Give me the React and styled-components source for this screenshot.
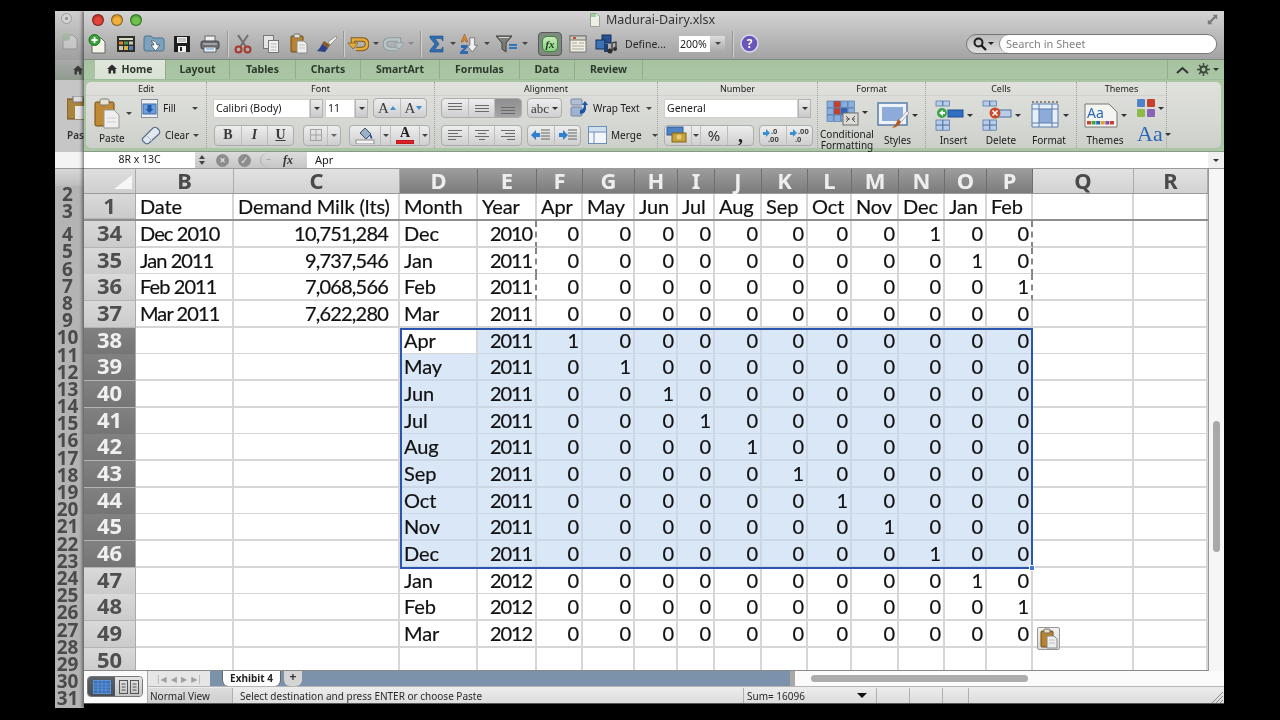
import styled, { createGlobalStyle } from "styled-components"

const GlobalStyle = createGlobalStyle`
  html, body { margin: 0; background: #000; overflow: hidden; }
  * { box-sizing: border-box; }
`

const COLS = [
  ["B", 98], ["C", 166], ["D", 78], ["E", 59], ["F", 46], ["G", 52], ["H", 43], ["I", 37], ["J", 47],
  ["K", 46], ["L", 44], ["M", 47], ["N", 46], ["O", 42], ["P", 46], ["Q", 101], ["R", 74],
]
const GRID = "52px " + COLS.map((c) => c[1] + "px").join(" ")
const MONTHS = ["Apr", "May", "Jun", "Jul", "Aug", "Sep", "Oct", "Nov", "Dec", "Jan", "Feb", "Mar"]

const OLD_ROWS = [
  { n: 34, date: "Dec 2010", milk: "10,751,284", m: "Dec", y: 2010, hit: 8 },
  { n: 35, date: "Jan 2011", milk: "9,737,546", m: "Jan", y: 2011, hit: 9 },
  { n: 36, date: "Feb 2011", milk: "7,068,566", m: "Feb", y: 2011, hit: 10 },
  { n: 37, date: "Mar 2011", milk: "7,622,280", m: "Mar", y: 2011, hit: -1 },
]
const NEW_ROWS = MONTHS.map((m, i) => ({ n: 38 + i, m, y: i < 9 ? 2011 : 2012, hit: i < 11 ? i : -1 }))
const ROWS = [...OLD_ROWS, ...NEW_ROWS, { n: 50, blank: true }]
const BACK_ROWS = Array.from({ length: 30 }, (_, i) => i + 2)

/* ---------- window shell ---------- */
const Desktop = styled.div`
  width: 1280px;
  height: 720px;
  background: #000;
  padding: 11px 56px 12px 55px;
  display: flex;
  font-family: "Noto Sans", "DejaVu Sans", sans-serif;
  color: #222;
  filter: blur(0.55px);
`
const BackWindow = styled.div`
  width: 29px;
  display: flex;
  flex-direction: column;
  overflow: hidden;
  background: #b4b4b4;
`
const BackTop = styled.div`
  height: 49px;
  background: linear-gradient(#cfcfcf, #9f9f9f);
  padding: 2px 0 0 6px;
  display: flex;
  flex-direction: column;
  gap: 8px;
`
const BackLight = styled.div`
  width: 11px;
  height: 11px;
  border-radius: 50%;
  background: radial-gradient(#999 25%, #d4d4d4 30%);
  border: 1px solid #9a9a9a;
`
const BackNewIcon = styled.svg`
  opacity: 0.45;
`
const BackTabs = styled.div`
  height: 20px;
  background: linear-gradient(#a9a9a9, #8f9b8f);
  display: flex;
  justify-content: flex-end;
  align-items: center;
  padding-right: 1px;
`
const BackRibbon = styled.div`
  height: 72px;
  background: #c6c6c6;
  padding: 16px 0 0 12px;
  overflow: hidden;
  white-space: nowrap;
  font-size: 10px;
  font-weight: 600;
  color: #333;
  span { display: block; margin-top: 5px; }
`
const BackFormula = styled.div`
  height: 17px;
  background: #f4f4f4;
  border-bottom: 1px solid #999;
`
const BackHead = styled.div`
  height: 17px;
  background: linear-gradient(#d8d8d8, #bdbdbd);
`
const BackRow = styled.div`
  height: ${(p) => p.$h}px;
  margin-bottom: ${(p) => p.$after}px;
  flex: none;
  text-align: center;
  font-size: 19px;
  font-weight: 700;
  line-height: 17px;
  color: #4b4b4b;
  padding-right: 4px;
`
const FrontWindow = styled.div`
  flex: 1;
  min-width: 0;
  display: flex;
  flex-direction: column;
  box-shadow: -2px 0 3px rgba(0, 0, 0, 0.45);
  z-index: 1;
`

/* ---------- title bar and toolbar ---------- */
const TitleBar = styled.div`
  height: 49px;
  background: linear-gradient(#d4d4d4, #bdbdbd 45%, #a3a3a3);
  border-bottom: 1px solid #7f8a7f;
`
const TitleRow = styled.div`
  height: 17px;
  display: flex;
  align-items: center;
  padding-left: 8px;
`
const Light = styled.div`
  width: 12px;
  height: 12px;
  border-radius: 50%;
  margin-right: ${(p) => p.$mr}px;
  border: 1px solid rgba(0, 0, 0, 0.35);
  background: radial-gradient(circle at 50% 60%, ${(p) => p.$c} 40%, ${(p) => p.$d} 100%);
`
const DocIconSlot = styled.div`
  margin-left: 448px;
  display: flex;
`
const TitleText = styled.div`
  font-size: 12.5px;
  color: #333;
  margin-left: 6px;
  white-space: nowrap;
`
const Toolbar = styled.div`
  height: 31px;
  display: flex;
  align-items: center;
`
const Slot = styled.div`
  width: ${(p) => p.$w}px;
  margin-left: ${(p) => p.$ml || 0}px;
  height: 26px;
  flex: none;
  display: flex;
  align-items: center;
  justify-content: center;
`
const Divider = styled.div`
  width: 1px;
  height: 26px;
  flex: none;
  margin-left: ${(p) => p.$ml || 0}px;
  background: #979797;
  box-shadow: 1px 0 0 #cfcfcf;
`
const Caret = styled.div`
  width: 0;
  height: 0;
  flex: none;
  margin-left: ${(p) => p.$ml || 0}px;
  border-left: ${(p) => p.$s || 3}px solid transparent;
  border-right: ${(p) => p.$s || 3}px solid transparent;
  border-top: ${(p) => p.$s || 3}px solid ${(p) => p.$c || "#333"};
`
const FxToggle = styled.div`
  width: 24px;
  height: 24px;
  margin-left: 9px;
  flex: none;
  border-radius: 4px;
  background: #7d8a7d;
  border: 1px solid #5a5a5a;
  padding: 3px;
`
const FxInner = styled.div`
  width: 100%;
  height: 100%;
  border-radius: 5px;
  border: 1px solid #3c8a3c;
  background: linear-gradient(#c9eab8, #8ccf86);
  font: italic 700 11px "Liberation Serif", serif;
  color: #1e3d1e;
  text-align: center;
  line-height: 14px;
`
const DefineLabel = styled.div`
  font-size: 10.5px;
  color: #2a2a2a;
  margin-left: 5px;
  width: 43px;
  flex: none;
  white-space: nowrap;
`
const ZoomCombo = styled.div`
  margin-left: 11px;
  width: 46px;
  height: 16px;
  flex: none;
  display: flex;
  background: #fff;
  font-size: 10.5px;
  line-height: 16px;
  padding-left: 1px;
  color: #222;
`
const ZoomArrow = styled.div`
  width: 15px;
  margin-left: auto;
  background: linear-gradient(#ddd, #a9a9a9);
  display: flex;
  align-items: center;
  justify-content: center;
`
const SearchBox = styled.div`
  margin-left: auto;
  margin-right: 7px;
  width: 251px;
  height: 20px;
  flex: none;
  display: flex;
  align-items: center;
  border: 1px solid #777;
  border-radius: 10px;
  background: linear-gradient(#bbb, #dedede);
  padding-left: 6px;
  gap: 1px;
`
const SearchInput = styled.div`
  flex: 1;
  height: 18px;
  margin-left: 4px;
  border-radius: 9px;
  background: #fff;
  border-left: 1px solid #888;
  padding-left: 6px;
  font-size: 11px;
  line-height: 18px;
  color: #808080;
`

/* ---------- ribbon tabs ---------- */
const TabBar = styled.div`
  height: 20px;
  display: flex;
  padding-left: 11px;
  background: linear-gradient(#a6c2a1, #aac6a5);
  border-bottom: 1px solid #9cbc97;
`
const RibbonTab = styled.div`
  width: ${(p) => p.$w}px;
  flex: none;
  display: flex;
  align-items: center;
  justify-content: center;
  gap: 4px;
  padding-bottom: 2px;
  font-size: 10.5px;
  font-weight: 700;
  color: #2c3a2c;
  border-right: 1px solid #8eae89;
  background: ${(p) => (p.$on ? "linear-gradient(#dfe6db, #d9e2d5)" : "none")};
`
const TabTools = styled.div`
  margin-left: auto;
  display: flex;
  align-items: center;
  gap: 8px;
  padding: 0 5px 0 8px;
  border-left: 1px solid #8eae89;
`

/* ---------- ribbon ---------- */
const RibbonWrap = styled.div`
  height: 72px;
  background: #aac6a5;
  padding: 2px 3px 3px 2px;
  border-bottom: 1px solid #8a9a88;
`
const RibbonPanel = styled.div`
  height: 100%;
  display: flex;
  border-radius: 5px;
  background: linear-gradient(#e0e1dd, #d6d8d3 60%, #cdd0ca);
`
const Group = styled.div`
  width: ${(p) => p.$w}px;
  flex: none;
  border-right: 1px dotted #a0a0a0;
  display: flex;
  flex-direction: column;
`
const GroupLabel = styled.div`
  height: 14px;
  text-align: center;
  font-size: 9px;
  line-height: 13px;
  color: #222;
  border-bottom: 1px solid #cfd1cc;
`
const GroupBody = styled.div`
  flex: 1;
  display: flex;
  padding-left: ${(p) => p.$pl || 0}px;
  padding-top: 1px;
`
const Rows = styled.div`
  display: flex;
  flex-direction: column;
  gap: 7px;
  padding-top: 1px;
`
const ControlRow = styled.div`
  height: 20px;
  display: flex;
  align-items: center;
  gap: ${(p) => p.$gap || 0}px;
  margin-left: ${(p) => p.$ml || 0}px;
`
const PasteCol = styled.div`
  width: 47px;
  margin-left: 8px;
  flex: none;
  font-size: 10px;
  color: #1a1a1a;
`
const PasteIconRow = styled.div`
  display: flex;
  align-items: center;
  gap: 6px;
  height: 32px;
`
const PasteLabel = styled.div`
  margin-top: 3px;
  padding-left: 5px;
  line-height: 13px;
`
const SmallLabel = styled.span`
  font-size: 10px;
  color: #1a1a1a;
  white-space: nowrap;
  margin-left: ${(p) => p.$ml || 0}px;
  width: ${(p) => (p.$w ? p.$w + "px" : "auto")};
  flex: none;
`
const Combo = styled.div`
  width: ${(p) => p.$w}px;
  height: 19px;
  flex: none;
  background: #fff;
  font-size: 10.5px;
  line-height: 19px;
  padding-left: 3px;
  color: #1a1a1a;
  box-shadow: inset 0 0 0 1px #d0d0d0;
`
const ComboArrow = styled.div`
  width: 13px;
  height: 19px;
  flex: none;
  margin-right: ${(p) => p.$mr || 0}px;
  background: linear-gradient(#ececec, #c9c9c9);
  border: 1px solid #b4b4b4;
  display: flex;
  align-items: center;
  justify-content: center;
`
const Seg = styled.div`
  display: flex;
  height: ${(p) => p.$h || 20}px;
  flex: none;
  margin-left: ${(p) => p.$ml || 0}px;
  border: 1px solid #adadad;
  border-radius: 4px;
  background: linear-gradient(#eeeeee, #cfcfcf);
  overflow: hidden;
`
const SegBtn = styled.div`
  width: ${(p) => p.$w}px;
  flex: none;
  display: flex;
  align-items: center;
  justify-content: center;
  gap: 1px;
  color: #333;
  border-left: ${(p) => (p.$first ? "none" : "1px solid #bdbdbd")};
  background: ${(p) => (p.$on ? "linear-gradient(#8f8f8f, #a5a5a5)" : "none")};
`
const SerifLetter = styled.span`
  font-family: "Liberation Serif", serif;
  font-size: ${(p) => p.$s || 14}px;
  font-weight: ${(p) => p.$wt || 400};
  font-style: ${(p) => (p.$it ? "italic" : "normal")};
  text-decoration: ${(p) => (p.$un ? "underline" : "none")};
  color: ${(p) => p.$c || "#3a3a3a"};
  line-height: 1;
`
const PercentSign = styled.span`
  font-size: 15px;
`
const LetterIcon = styled.div`
  display: flex;
  flex-direction: column;
  align-items: center;
  line-height: 1;
`
const ColorBar = styled.div`
  width: 18px;
  height: 4px;
  background: ${(p) => p.$c};
  border: 1px solid rgba(0, 0, 0, 0.15);
`
const BigTool = styled.div`
  width: ${(p) => p.$w}px;
  margin-left: ${(p) => p.$ml || 0}px;
  padding-top: 2px;
  flex: none;
  display: flex;
  flex-direction: column;
  align-items: center;
`
const BigIconRow = styled.div`
  height: ${(p) => p.$h || 33}px;
  display: flex;
  align-items: center;
  gap: 3px;
`
const BigLabel = styled.div`
  margin-top: 3px;
  font-size: 10px;
  line-height: 10.5px;
  text-align: center;
  color: #1a1a1a;
  white-space: nowrap;
`
const ThemeFontLetters = styled.div`
  font-family: "Liberation Serif", serif;
  font-size: 22px;
  line-height: 20px;
  color: #2a66b8;
  display: flex;
  align-items: center;
  gap: 1px;
`
const ThemesStack = styled.div`
  margin-left: 8px;
  display: flex;
  flex-direction: column;
  gap: 6px;
  margin-top: 1px;
`

/* ---------- formula bar ---------- */
const FormulaBar = styled.div`
  height: 17px;
  display: flex;
  background: #fff;
  border-bottom: 1px solid #9a9a9a;
`
const NameBox = styled.div`
  width: 111px;
  flex: none;
  text-align: center;
  font-size: 10.5px;
  line-height: 15px;
  color: #1a1a1a;
`
const FormulaTools = styled.div`
  width: 112px;
  flex: none;
  background: linear-gradient(#dcdcdc, #c6c6c6);
  display: flex;
  align-items: center;
  padding-left: 4px;
`
const FormulaInput = styled.div`
  flex: 1;
  font-size: 11px;
  line-height: 15px;
  padding-left: 8px;
  color: #1a1a1a;
`
const FormulaCaret = styled.div`
  width: 16px;
  flex: none;
  display: flex;
  align-items: center;
  justify-content: center;
  background: #f0f0f0;
`
const StepArrows = styled.div`
  display: flex;
  flex-direction: column;
  gap: 2px;
  width: 6px;
  margin-right: 11px;
`
const ArrowUp = styled.div`
  width: 0;
  height: 0;
  border-left: 3px solid transparent;
  border-right: 3px solid transparent;
  border-bottom: 4px solid ${(p) => p.$c || "#444"};
`
const ArrowDown = styled.div`
  width: 0;
  height: 0;
  border-left: 3px solid transparent;
  border-right: 3px solid transparent;
  border-top: 4px solid ${(p) => p.$c || "#444"};
`
const RoundBtn = styled.div`
  width: 13px;
  height: 13px;
  flex: none;
  margin-right: 9px;
  border-radius: 50%;
  background: #8d8d8d;
  color: #e6e6e6;
  font-size: 10px;
  font-weight: 700;
  line-height: 12px;
  text-align: center;
`
const FxLabel = styled.span`
  font: italic 700 12px "Liberation Serif", serif;
  color: #333;
  margin-left: 7px;
`
const ParenBtn = styled.div`
  width: 16px;
  height: 14px;
  flex: none;
  border-left: 1.5px solid #aaa;
  border-radius: 50% 0 0 50%;
  color: #999;
  font-size: 9px;
  line-height: 11px;
  text-align: center;
`

/* ---------- sheet ---------- */
const SheetArea = styled.div`
  height: 502px;
  display: flex;
  background: #f4f4f4;
`
const SheetGrid = styled.div`
  position: relative;
  width: 1124px;
  flex: none;
  overflow: hidden;
  background: #fff;
  border-bottom: 1px solid #8a8a8a;
`
const HeadRow = styled.div`
  display: grid;
  grid-template-columns: ${GRID};
  height: 25px;
  border-bottom: 1px solid #9a9a9a;
`
const Corner = styled.div`
  background: linear-gradient(#dedede, #cfcfcf);
  border-right: 1px solid #aaa;
  display: flex;
  align-items: flex-end;
  justify-content: flex-end;
  padding: 0 3px 4px 0;
`
const ColHead = styled.div`
  font-size: 22px;
  font-weight: 700;
  line-height: 23px;
  text-align: center;
  border-right: 1px solid ${(p) => (p.$sel ? "#6e6e6e" : "#ababab")};
  color: ${(p) => (p.$sel ? "#eeeeee" : "#4a4a4a")};
  background: ${(p) => (p.$sel ? "linear-gradient(#9d9d9d, #7b7b7b)" : "linear-gradient(#e2e2e2, #d2d2d2)")};
`
const SheetRow = styled.div`
  display: grid;
  grid-template-columns: ${GRID};
  height: ${(p) => (p.$first ? 27 : 26.67)}px;
  ${(p) => p.$first && "border-bottom: 2px solid #8f8f8f;"}
`
const RowHead = styled.div`
  font-size: 22px;
  font-weight: 700;
  line-height: 22px;
  text-align: center;
  border-right: 1px solid #aaa;
  border-bottom: 1px solid #b4b4b4;
  color: ${(p) => (p.$sel ? "#f0f0f0" : "#4f4f4f")};
  background: ${(p) => (p.$sel ? "linear-gradient(#818181, #757575)" : "linear-gradient(#d9d9d9, #cbcbcb)")};
`
const Cell = styled.div`
  font-family: Lato, "Noto Sans", sans-serif;
  font-size: 20px;
  line-height: 25px;
  white-space: nowrap;
  color: #111;
  -webkit-text-stroke: 0.2px #111;
  letter-spacing: ${(p) => p.$ls || -0.1}px;
  text-align: ${(p) => (p.$right ? "right" : "left")};
  padding: 0 ${(p) => (p.$right ? p.$pr || 2 : 3)}px 0 ${(p) => (p.$right ? 0 : 4)}px;
  background: ${(p) => (p.$sel ? "#dae7f6" : "#fff")};
  border-bottom: ${(p) => (p.$noBottom ? "none" : `2px solid ${p.$sel ? "#cbd7e5" : "#d6d6d6"}`)};
  border-right: ${(p) => (p.$dash ? "2px dashed #858585" : `2px solid ${p.$sel ? "#cbd7e5" : "#d6d6d6"}`)};
`
const Selection = styled.div`
  position: absolute;
  left: 316px;
  top: 159px;
  width: 633px;
  height: 241px;
  border: 2px solid #2a57ad;
  pointer-events: none;
`
const FillHandle = styled.div`
  position: absolute;
  right: -4px;
  bottom: -4px;
  width: 6px;
  height: 6px;
  background: #3f78d8;
  border: 1px solid #fff;
`
const PasteOption = styled.div`
  position: absolute;
  left: 953px;
  top: 458px;
  width: 23px;
  height: 23px;
  border: 1px solid #999;
  border-radius: 2px;
  background: linear-gradient(#f2f2f2, #d8d8d8);
  display: flex;
  align-items: center;
  justify-content: center;
`
const VScroll = styled.div`
  flex: 1;
  padding: 252px 4px 0 4px;
  background: #f6f6f6;
  border-left: 1px solid #999;
`
const VThumb = styled.div`
  height: 131px;
  border-radius: 4px;
  background: #a9a9a9;
`

/* ---------- bottom bars ---------- */
const BottomBars = styled.div`
  display: flex;
  height: 33px;
  background: #f2f2f2;
  border-bottom: 1px solid #555;
`
const ViewSwitch = styled.div`
  width: 64px;
  flex: none;
  background: #fafafa;
  padding: 5px 0 0 3px;
  border-right: 1px solid #aaa;
`
const ViewSeg = styled.div`
  display: flex;
  width: 56px;
  height: 21px;
  border: 1px solid #777;
  border-radius: 4px;
  overflow: hidden;
`
const ViewBtn = styled.div`
  flex: 1;
  display: flex;
  align-items: center;
  justify-content: center;
  background: ${(p) => (p.$on ? "linear-gradient(#5b6268, #484e54)" : "linear-gradient(#e4e4e4, #c4c4c4)")};
`
const BottomRight = styled.div`
  flex: 1;
  min-width: 0;
  display: flex;
  flex-direction: column;
`
const SheetTabs = styled.div`
  height: 15px;
  display: flex;
  background: #7b92aa;
`
const TabNav = styled.div`
  width: 62px;
  flex: none;
  background: #e6e6e6;
  display: flex;
  align-items: center;
  justify-content: space-around;
  padding: 0 6px;
  color: #a0a0a0;
  font-size: 8px;
`
const SheetTab = styled.div`
  width: 59px;
  margin-left: 12px;
  flex: none;
  background: #fff;
  border-radius: 0 0 6px 6px;
  font-size: 10px;
  font-weight: 700;
  line-height: 14px;
  text-align: center;
  color: #222;
  border-left: 1px solid #666;
  border-right: 1px solid #666;
`
const AddTab = styled.div`
  width: 18px;
  margin-left: 3px;
  flex: none;
  background: #d4d4d4;
  border-radius: 0 0 6px 6px;
  font-size: 12px;
  font-weight: 700;
  line-height: 12px;
  text-align: center;
  color: #333;
`
const HScrollTrack = styled.div`
  width: 434px;
  margin-left: auto;
  flex: none;
  background: #fbfbfb;
  border-left: 5px solid #a8a8a8;
  padding: 4px 0 0 16px;
`
const HThumb = styled.div`
  width: 217px;
  height: 7px;
  border-radius: 4px;
  background: #acacac;
`
const StatusBar = styled.div`
  height: 17px;
  display: flex;
  background: linear-gradient(#ededed, #dcdcdc);
  border-top: 1px solid #b4b4b4;
  font-size: 10px;
  line-height: 16px;
  padding-top: 1px;
  color: #2a2a2a;
`
const StatusCell = styled.div`
  width: ${(p) => p.$w}px;
  flex: none;
  padding-left: ${(p) => p.$pl || 0}px;
  border-right: 1px solid #b0b0b0;
  display: flex;
  align-items: center;
  white-space: nowrap;
  background: ${(p) => (p.$dark ? "linear-gradient(#dcdcdc, #cfcfcf)" : "none")};
`
const StatusEnd = styled.div`
  flex: 1;
  display: flex;
  justify-content: flex-end;
  align-items: flex-end;
  padding-right: 1px;
`

/* ---------- icons ---------- */
const NewIcon = () => (
  <svg width="20" height="20" viewBox="0 0 20 20">
    <path d="M4 4h9l4 4v11H4z" fill="#f3f3e8" stroke="#666" />
    <circle cx="6.500" cy="6" r="5.500" fill="#35a538" stroke="#1d6b22" />
    <path d="M6.500 3v6M3.500 6h6" stroke="#fff" strokeWidth="1.800" />
  </svg>
)
const GalleryIcon = () => (
  <svg width="20" height="18" viewBox="0 0 20 18">
    <rect x="1" y="1" width="18" height="16" fill="#2f2f2a" />
    <rect x="3" y="3" width="14" height="2" fill="#d9d9c8" />
    <rect x="3" y="6.500" width="4" height="3" fill="#e0832b" />
    <rect x="8" y="6.500" width="4" height="3" fill="#4a9a4a" />
    <rect x="13" y="6.500" width="4" height="3" fill="#c9c9b8" />
    <rect x="3" y="11" width="4" height="4" fill="#c9c9b8" />
    <rect x="8" y="11" width="4" height="4" fill="#d8b53a" />
    <rect x="13" y="11" width="4" height="4" fill="#4f7fc4" />
  </svg>
)
const OpenIcon = () => (
  <svg width="22" height="20" viewBox="0 0 22 20">
    <path d="M1 4q0-2 2-2h5l2 2h9q2 0 2 2v9q0 2-2 2H3q-2 0-2-2z" fill="#7ba3bf" stroke="#4d728c" />
    <path d="M8 7q5-1 6 4h3l-4.500 6L8 11h3q0-2-3-4z" fill="#fff" stroke="#444" strokeWidth="0.700" />
  </svg>
)
const SaveIcon = () => (
  <svg width="18" height="18" viewBox="0 0 18 18">
    <path d="M1 1h16v16H1z" fill="#1d1d1d" />
    <rect x="4" y="2" width="10" height="6" fill="#efefef" />
    <path d="M5 4h8M5 6h8" stroke="#999" />
    <rect x="5" y="11" width="8" height="6" fill="#efefef" />
    <rect x="7" y="12" width="2" height="4" fill="#1d1d1d" />
  </svg>
)
const PrintIcon = () => (
  <svg width="20" height="18" viewBox="0 0 20 18">
    <rect x="5" y="1" width="10" height="6" fill="#efefef" stroke="#666" />
    <rect x="1" y="6" width="18" height="8" rx="2" fill="#6d6f72" stroke="#444" />
    <rect x="3" y="8" width="14" height="2" fill="#9ea1a5" />
    <rect x="4" y="12" width="12" height="5" fill="#f3f3f3" stroke="#666" />
    <path d="M6 14h8" stroke="#5a9bd0" />
  </svg>
)
const CutIcon = () => (
  <svg width="18" height="20" viewBox="0 0 18 20" fill="none">
    <path d="M4 1l8 12M14 1L6 13" stroke="#6f6f6f" strokeWidth="2" />
    <circle cx="4.500" cy="15.500" r="3" stroke="#a8382b" strokeWidth="2" />
    <circle cx="13.500" cy="15.500" r="3" stroke="#a8382b" strokeWidth="2" />
  </svg>
)
const CopyIcon = () => (
  <svg width="18" height="20" viewBox="0 0 18 20">
    <rect x="1.500" y="1.500" width="10" height="13" fill="#e6e6e6" stroke="#777" />
    <rect x="6.500" y="6.500" width="10" height="12" fill="#f2f2f2" stroke="#777" />
    <path d="M8.500 10h6M8.500 13h6M8.500 16h6" stroke="#b5b5b5" />
  </svg>
)
const ClipIcon = ({ w = 18, h = 21 }) => (
  <svg width={w} height={h} viewBox="0 0 18 21">
    <rect x="1" y="3" width="12" height="16" rx="1" fill="#b9822c" stroke="#6e4b17" />
    <rect x="4" y="1" width="6" height="4" rx="1" fill="#e6e0cc" stroke="#6e6e6e" />
    <path d="M7 8h7l3 3v9H7z" fill="#eeeeee" stroke="#888" />
    <path d="M9 12h6M9 15h6" stroke="#c2c2c2" />
  </svg>
)
const BrushIcon = () => (
  <svg width="22" height="18" viewBox="0 0 22 18">
    <path d="M20 1l-8 6 2 3 7-7z" fill="#f0f0f0" stroke="#777" strokeWidth="0.700" />
    <path d="M8 6l6 4-2 3-6-4z" fill="#8a5a22" />
    <path d="M6 9l6 4-3 4-8-1q3-2 5-7z" fill="#2c3f86" />
  </svg>
)
const UndoIcon = () => (
  <svg width="22" height="17" viewBox="0 0 22 17" fill="none">
    <path d="M6 10V4.500h9q5 0 5 4.500t-5 5H9" stroke="#7a5a1a" strokeWidth="4.500" />
    <path d="M6 10V4.500h9q5 0 5 4.500t-5 5H9" stroke="#e6a93b" strokeWidth="2.600" />
    <path d="M1 8h10l-5 6z" fill="#e6a93b" stroke="#7a5a1a" strokeWidth="0.700" />
  </svg>
)
const RedoIcon = () => (
  <svg width="22" height="17" viewBox="0 0 22 17" fill="none">
    <path d="M16 10V4.500H7Q2 4.500 2 9t5 5h6" stroke="#8b9aa0" strokeWidth="4.500" />
    <path d="M16 10V4.500H7Q2 4.500 2 9t5 5h6" stroke="#b9c4c6" strokeWidth="2.600" />
    <path d="M21 8H11l5 6z" fill="#b9c4c6" stroke="#8b9aa0" strokeWidth="0.700" />
  </svg>
)
const SumIcon = () => (
  <svg width="15" height="18" viewBox="0 0 15 18">
    <path d="M1 1h13v5l-2-2.500H6l4 5.500-4.500 5.500H12l2-2.500v5H1v-2l5-6-5-6z" fill="#2f6fb5" stroke="#1c4a80" strokeWidth="0.600" />
  </svg>
)
const SortIcon = () => (
  <svg width="20" height="22" viewBox="0 0 20 22">
    <path d="M2 9l3.500-8L9 9H7l-.7-2H4.700L4 9z" fill="#d88a2e" stroke="#8a5514" strokeWidth="0.500" />
    <path d="M2 12h7v2l-4 4h4v3H1v-2l4-4H2z" fill="#2e69b4" />
    <path d="M12 5h5v8h3l-5.500 7L9 13h3z" transform="translate(-0.500 0) scale(0.950)" fill="#efefef" stroke="#666" strokeWidth="0.800" />
  </svg>
)
const FilterIcon = () => (
  <svg width="24" height="18" viewBox="0 0 24 18">
    <path d="M1 1h16l-6 7v9l-4-3V8z" fill="#7c7c78" stroke="#3f3f3c" />
    <path d="M4 2.500h10" stroke="#d9d9d4" />
    <path d="M14 10h8M14 13h8" stroke="#2e76b8" strokeWidth="2" />
  </svg>
)
const ToolboxIcon = () => (
  <svg width="18" height="18" viewBox="0 0 18 18">
    <rect x="1" y="1" width="16" height="16" fill="#f1efe4" stroke="#777" />
    <rect x="1" y="1" width="16" height="4" fill="#cfcfc4" stroke="#777" />
    <path d="M3 8h5M10 8h5M3 11h12M3 14h12" stroke="#a6a69c" />
    <rect x="4" y="2" width="3" height="2" fill="#c9502f" />
  </svg>
)
const MediaIcon = () => (
  <svg width="22" height="20" viewBox="0 0 22 20">
    <rect x="7" y="1" width="9" height="8" fill="#26508f" stroke="#12305f" />
    <rect x="1" y="6" width="9" height="9" fill="#3d72b5" stroke="#12305f" />
    <rect x="9" y="10" width="4" height="8" fill="#223f73" />
    <circle cx="15" cy="17" r="2.500" fill="#2c2c2c" />
    <circle cx="20" cy="15" r="2" fill="#2c2c2c" />
    <path d="M17 17V9l4-1v7" stroke="#2c2c2c" fill="none" strokeWidth="1.200" />
  </svg>
)
const HelpIcon = () => (
  <svg width="19" height="19" viewBox="0 0 19 19">
    <circle cx="9.500" cy="9.500" r="8.500" fill="#6a55b8" stroke="#dcdcf0" strokeWidth="1.500" />
    <text x="9.500" y="14" textAnchor="middle" fontSize="12" fontWeight="700" fontFamily="Noto Sans" fill="#fff">?</text>
  </svg>
)
const SearchGlass = () => (
  <svg width="14" height="14" viewBox="0 0 14 14" fill="none">
    <circle cx="5.500" cy="5.500" r="4" stroke="#1e1e1e" strokeWidth="2" />
    <path d="M8.500 8.500L13 13" stroke="#1e1e1e" strokeWidth="2.400" />
  </svg>
)
const ExpandIcon = () => (
  <svg width="11" height="11" viewBox="0 0 14 14" fill="#7a7a7a">
    <path d="M7 1h6v6l-2-2-3 3-2-2 3-3zM1 7v6h6l-2-2 3-3-2-2-3 3z" />
  </svg>
)
const DocTitleIcon = () => (
  <svg width="10" height="14" viewBox="0 0 10 14">
    <path d="M.5.500h6l3 3v10H.5z" fill="#ecefe6" stroke="#9aa595" />
    <path d="M1 1h5v3H1z" fill="#9fcf9f" />
  </svg>
)
const HomeGlyph = ({ c = "#2c2c2c" }) => (
  <svg width="10" height="10" viewBox="0 0 10 10" fill={c}>
    <path d="M5 .5L10 5H8.500v4.500H6V6.500H4v3H1.500V5H0z" />
  </svg>
)
const ChevronUp = () => (
  <svg width="13" height="8" viewBox="0 0 13 8" fill="none">
    <path d="M1 7l5.500-5L12 7" stroke="#333" strokeWidth="2" />
  </svg>
)
const GearIcon = () => (
  <svg width="13" height="13" viewBox="0 0 13 13" fill="none">
    <circle cx="6.500" cy="6.500" r="3" stroke="#3d4a3d" strokeWidth="2" />
    <path d="M6.500 0v3M6.500 10v3M0 6.500h3M10 6.500h3M2 2l2 2M9 9l2 2M11 2L9 4M4 9l-2 2" stroke="#3d4a3d" strokeWidth="1.500" />
  </svg>
)
const BigPasteIcon = () => (
  <svg width="26" height="31" viewBox="0 0 26 31">
    <rect x="1" y="4" width="19" height="24" rx="1.500" fill="#c08a34" stroke="#6e4b17" />
    <rect x="6" y="1" width="9" height="6" rx="1.500" fill="#e8e2cf" stroke="#777" />
    <path d="M10 12h10l5 5v13H10z" fill="#efefef" stroke="#999" />
    <path d="M13 20h9M13 24h9" stroke="#cfcfcf" />
  </svg>
)
const FillIcon = () => (
  <svg width="17" height="19" viewBox="0 0 17 19">
    <rect x=".5" y=".5" width="16" height="18" fill="#eef0f3" stroke="#8a8f96" />
    <rect x="2" y="5" width="13" height="10" fill="#6d9fdb" stroke="#3d6da8" />
    <path d="M6.500 6h4v4h2L8.500 14l-4-4h2z" fill="#1e58a8" />
  </svg>
)
const EraserIcon = () => (
  <svg width="20" height="19" viewBox="0 0 20 19">
    <path d="M2 12L12 2q2-1.500 4 0l2 2q1.500 2 0 4L8 17q-2 1.500-4 0l-2-2q-1.500-1.500 0-3z" fill="#e3e9f1" stroke="#5c6f88" strokeWidth="1.200" />
    <path d="M5 9l6 6" stroke="#a9b7c8" />
  </svg>
)
const LinesIcon = ({ aligns, w = 16, y = 0 }) => (
  <svg width={w} height="14" viewBox={`0 0 ${w} 14`} stroke="#6a6a6a" strokeWidth="1.200">
    {aligns.map(([x1, x2], i) => (
      <line key={i} x1={x1} x2={x2} y1={y + 2.5 + i * 3} y2={y + 2.5 + i * 3} />
    ))}
  </svg>
)
const BorderIcon = () => (
  <svg width="12" height="12" viewBox="0 0 12 12" fill="none" stroke="#a3a3a3">
    <rect x=".5" y=".5" width="11" height="11" />
    <path d="M6 0v12M0 6h12" />
  </svg>
)
const BucketIcon = () => (
  <svg width="20" height="18" viewBox="0 0 20 18">
    <path d="M5 7l5-5 6 6-5 5z" fill="#9cb1c9" stroke="#3a4d66" />
    <path d="M15 8q3 2 2 5-3-1-2-5z" fill="#2b5da8" />
    <rect x="1" y="14" width="18" height="4" fill="#f4f4f4" stroke="#8d8d8d" />
  </svg>
)
const WrapIcon = () => (
  <svg width="19" height="20" viewBox="0 0 19 20">
    <rect x="1" y="1" width="11" height="6" rx="1" fill="#b4bfd4" stroke="#7788a6" />
    <rect x="1" y="9" width="11" height="9" rx="1" fill="#9fb3d1" stroke="#7788a6" />
    <path d="M10 16q7 0 6-9h2l-3-4-3 4h2q0 5-4 5z" fill="#1e55a8" />
  </svg>
)
const MergeIcon = () => (
  <svg width="19" height="18" viewBox="0 0 19 18">
    <rect x=".5" y=".5" width="18" height="17" fill="#f2f6fb" stroke="#6d8fb7" />
    <rect x="1" y="1" width="17" height="5" fill="#d1e0f1" />
    <path d="M6 6v12M1 6h17" stroke="#6d8fb7" />
  </svg>
)
const IndentIcon = ({ flip }) => (
  <svg width="20" height="14" viewBox="0 0 20 14">
    <path d="M10 2h9M10 5h9M10 8h9M10 11h9" stroke="#666" strokeWidth="1.200" />
    <path d={flip ? "M1 5h4V2l5 5-5 5V9H1z" : "M9 5H5V2L0 7l5 5V9h4z"} fill="#2d7fd1" />
  </svg>
)
const CurrencyIcon = () => (
  <svg width="24" height="18" viewBox="0 0 24 18">
    <rect x="1" y="1" width="16" height="8" fill="#4f83c8" stroke="#2f5d96" />
    <rect x="6" y="7" width="14" height="9" fill="#c9a23c" stroke="#7f6518" />
    <circle cx="13" cy="11" r="2.500" fill="#e6cd7c" />
  </svg>
)
const DecimalIcon = ({ top, bottom }) => (
  <svg width="22" height="17" viewBox="0 0 22 17">
    <path d="M1 5h3V2l4 4-4 4V8H1z" fill="#3a8fd1" />
    <text x="9" y="7" fontSize="7.500" fontWeight="700" fontFamily="Noto Sans" fill="#444">{top}</text>
    <text x="6" y="15" fontSize="7.500" fontWeight="700" fontFamily="Noto Sans" fill="#444">{bottom}</text>
  </svg>
)
const CondIcon = () => (
  <svg width="33" height="26" viewBox="0 0 33 26">
    {[0, 1, 2, 3].map((c) =>
      [0, 1, 2].map((r) => (
        <rect key={c + "-" + r} x={1 + c * 7} y={1 + r * 7} width="6.500" height="6.500"
          fill={c === 1 && r < 2 ? "#c8402c" : r === 1 && c === 2 ? "#2f62b5" : "#88aedc"} stroke="#4a6fa5" strokeWidth="0.600" />
      ))
    )}
    <rect x="17" y="13" width="15" height="12" fill="#dcdcd4" stroke="#6c6c6c" />
    <path d="M20 19h4M26 19h3M20 16l3 3-3 3M29 16l-3 3 3 3" stroke="#555" fill="none" />
  </svg>
)
const StylesIcon = () => (
  <svg width="32" height="28" viewBox="0 0 32 28">
    <rect x="1" y="1" width="29" height="22" fill="#eef3fa" stroke="#5a7eab" strokeWidth="1.500" />
    <rect x="5" y="5" width="21" height="14" fill="#8dabd8" />
    <path d="M30 9l-8 9 2 2 8-9z" fill="#f0f0f0" stroke="#888" strokeWidth="0.600" />
    <path d="M21 17l3 3q-2 5-9 6 4-3 6-9z" fill="#b25a20" />
  </svg>
)
const InsertIcon = () => (
  <svg width="29" height="31" viewBox="0 0 29 31">
    {[0, 1].map((c) => <rect key={"a" + c} x={1 + c * 7} y="1" width="6.500" height="5" fill="#b9cde8" stroke="#4a6fa5" strokeWidth="0.700" />)}
    {[0, 1].map((c) => [0, 1].map((r) => <rect key={"b" + c + r} x={1 + c * 7} y={20 + r * 5.2} width="6.500" height="5" fill="#b9cde8" stroke="#4a6fa5" strokeWidth="0.700" />))}
    <rect x="13" y="10" width="15" height="7" fill="#2f70c4" stroke="#204f8c" />
    <circle cx="7" cy="13" r="5" fill="#3aa64a" />
    <path d="M4 13l4-3v2h2v2H8v2z" fill="#fff" />
  </svg>
)
const DeleteIcon = () => (
  <svg width="30" height="31" viewBox="0 0 30 31">
    {[0, 1].map((c) => <rect key={"a" + c} x={1 + c * 7} y="1" width="6.500" height="5" fill="#b9cde8" stroke="#4a6fa5" strokeWidth="0.700" />)}
    {[0, 1].map((c) => [0, 1].map((r) => <rect key={"b" + c + r} x={1 + c * 7} y={20 + r * 5.2} width="6.500" height="5" fill="#b9cde8" stroke="#4a6fa5" strokeWidth="0.700" />))}
    <rect x="14" y="10" width="15" height="7" fill="#b9cde8" stroke="#4a6fa5" />
    <circle cx="13" cy="13" r="5.500" fill="#c8482a" />
    <path d="M10.500 10.500l5 5M15.500 10.500l-5 5" stroke="#fff" strokeWidth="1.500" />
  </svg>
)
const FormatIcon = () => (
  <svg width="30" height="30" viewBox="0 0 30 30" fill="none">
    <path d="M2 3h26v23H2z" fill="#e6eef8" stroke="#5a7eab" />
    <rect x="9" y="8" width="13" height="14" fill="#8dabd8" />
    <path d="M2 8h26M9 3v23M22 3v23M2 22h26" stroke="#5a7eab" />
    <path d="M2 1h26" stroke="#333" strokeDasharray="2 2" />
  </svg>
)
const ThemesIcon = () => (
  <svg width="34" height="25" viewBox="0 0 34 25">
    <path d="M1 1h24l8 8v15H1z" fill="#f5f5f0" stroke="#777" />
    <text x="3" y="15" fontSize="14" fontFamily="Noto Sans" fill="#2a66b8">Aa</text>
    {["#c8402c", "#3aa64a", "#2f62b5", "#d8a62c", "#7a4fb0", "#c8402c"].map((c, i) => (
      <rect key={i} x={3 + i * 4.6} y="18" width="4" height="3.500" fill={c} />
    ))}
  </svg>
)
const ColorsIcon = () => (
  <svg width="19" height="18" viewBox="0 0 19 18">
    <rect x="0" y="0" width="8" height="8" rx="1" fill="#4f83c8" />
    <rect x="10" y="0" width="8" height="8" rx="1" fill="#c8402c" />
    <rect x="0" y="10" width="8" height="8" rx="1" fill="#8dbb4a" />
    <rect x="10" y="10" width="8" height="8" rx="1" fill="#8a62b8" />
  </svg>
)
const CornerMark = () => (
  <svg width="18" height="14" viewBox="0 0 18 14">
    <path d="M18 0v14H0z" fill="#f6f6f6" />
  </svg>
)
const NormalViewIcon = () => (
  <svg width="18" height="14" viewBox="0 0 18 14" stroke="#5d92d6" fill="#3c6fb5">
    <rect x=".5" y=".5" width="17" height="13" />
    <path d="M.5 4h17M.5 7h17M.5 10h17M5 0v14M9 0v14M13 0v14" />
  </svg>
)
const LayoutViewIcon = () => (
  <svg width="22" height="14" viewBox="0 0 22 14" fill="none" stroke="#555">
    <rect x="1.500" y=".5" width="8" height="13" />
    <rect x="12.500" y=".5" width="8" height="13" />
    <path d="M3.500 4h4M3.500 7h4M3.500 10h4M14.500 4h4M14.500 7h4M14.500 10h4" />
  </svg>
)
const GripIcon = () => (
  <svg width="11" height="11" viewBox="0 0 11 11" stroke="#8a8a8a">
    <path d="M0 11L11 0M4 11l7-7M8 11l3-3" />
  </svg>
)

const A_LEFT = [[1, 15], [1, 11], [1, 15], [1, 9]]
const A_CENTER = [[1, 15], [4, 12], [1, 15], [5, 11]]
const A_RIGHT = [[1, 15], [5, 15], [1, 15], [7, 15]]
const A_FULL = [[1, 15], [1, 15], [1, 15]]

const Ribbon = () => (
  <RibbonWrap>
    <RibbonPanel>
      <Group $w={121}>
        <GroupLabel>Edit</GroupLabel>
        <GroupBody>
          <PasteCol>
            <PasteIconRow>
              <BigPasteIcon />
              <Caret $c="#444" />
            </PasteIconRow>
            <PasteLabel>Paste</PasteLabel>
          </PasteCol>
          <Rows>
            <ControlRow>
              <FillIcon />
              <SmallLabel $ml={5} $w={21}>Fill</SmallLabel>
              <Caret $ml={8} $c="#444" />
            </ControlRow>
            <ControlRow>
              <EraserIcon />
              <SmallLabel $ml={4}>Clear</SmallLabel>
              <Caret $ml={4} $c="#444" />
            </ControlRow>
          </Rows>
        </GroupBody>
      </Group>

      <Group $w={228}>
        <GroupLabel>Font</GroupLabel>
        <GroupBody $pl={6}>
          <Rows>
            <ControlRow>
              <Combo $w={97}>Calibri (Body)</Combo>
              <ComboArrow $mr={2}><Caret $c="#333" /></ComboArrow>
              <Combo $w={30}>11</Combo>
              <ComboArrow $mr={5}><Caret $c="#333" /></ComboArrow>
              <Seg>
                <SegBtn $w={26} $first><SerifLetter $s={15}>A</SerifLetter><ArrowUp $c="#3f8fd6" /></SegBtn>
                <SegBtn $w={26}><SerifLetter $s={15}>A</SerifLetter><ArrowDown $c="#3f8fd6" /></SegBtn>
              </Seg>
            </ControlRow>
            <ControlRow $ml={1}>
              <Seg $h={21}>
                <SegBtn $w={26} $first><SerifLetter $s={14} $wt={700}>B</SerifLetter></SegBtn>
                <SegBtn $w={26}><SerifLetter $s={14} $it $wt={700}>I</SerifLetter></SegBtn>
                <SegBtn $w={26}><SerifLetter $s={14} $un $wt={700}>U</SerifLetter></SegBtn>
              </Seg>
              <Seg $h={21} $ml={9}>
                <SegBtn $w={23} $first><BorderIcon /></SegBtn>
                <SegBtn $w={13}><Caret $c="#666" /></SegBtn>
              </Seg>
              <Seg $h={21} $ml={8}>
                <SegBtn $w={30} $first><BucketIcon /></SegBtn>
                <SegBtn $w={10}><Caret $c="#444" /></SegBtn>
                <SegBtn $w={29}>
                  <LetterIcon><SerifLetter $s={14} $wt={700} $c="#222">A</SerifLetter><ColorBar $c="#e01f26" /></LetterIcon>
                </SegBtn>
                <SegBtn $w={10}><Caret $c="#444" /></SegBtn>
              </Seg>
            </ControlRow>
          </Rows>
        </GroupBody>
      </Group>

      <Group $w={223}>
        <GroupLabel>Alignment</GroupLabel>
        <GroupBody $pl={6}>
          <Rows>
            <ControlRow>
              <Seg>
                <SegBtn $w={26} $first><LinesIcon aligns={A_FULL} /></SegBtn>
                <SegBtn $w={26}><LinesIcon aligns={A_FULL} y={2} /></SegBtn>
                <SegBtn $w={27} $on><LinesIcon aligns={A_FULL} y={4} /></SegBtn>
              </Seg>
              <Seg $ml={5}>
                <SegBtn $w={33} $first><SerifLetter $s={13}>abc</SerifLetter><Caret $ml={2} $c="#333" /></SegBtn>
              </Seg>
              <Slot $w={20} $ml={7}><WrapIcon /></Slot>
              <SmallLabel $ml={4} $w={50}>Wrap Text</SmallLabel>
              <Caret $ml={3} $c="#444" />
            </ControlRow>
            <ControlRow>
              <Seg $h={21}>
                <SegBtn $w={26} $first><LinesIcon aligns={A_LEFT} /></SegBtn>
                <SegBtn $w={26}><LinesIcon aligns={A_CENTER} /></SegBtn>
                <SegBtn $w={27}><LinesIcon aligns={A_RIGHT} /></SegBtn>
              </Seg>
              <Seg $h={21} $ml={5}>
                <SegBtn $w={26} $first><IndentIcon /></SegBtn>
                <SegBtn $w={26}><IndentIcon flip /></SegBtn>
              </Seg>
              <Slot $w={20} $ml={6}><MergeIcon /></Slot>
              <SmallLabel $ml={4} $w={33}>Merge</SmallLabel>
              <Caret $ml={8} $c="#444" />
            </ControlRow>
          </Rows>
        </GroupBody>
      </Group>

      <Group $w={160}>
        <GroupLabel>Number</GroupLabel>
        <GroupBody $pl={6}>
          <Rows>
            <ControlRow>
              <Combo $w={134}>General</Combo>
              <ComboArrow><Caret $c="#333" /></ComboArrow>
            </ControlRow>
            <ControlRow>
              <Seg $h={21}>
                <SegBtn $w={26} $first><CurrencyIcon /></SegBtn>
                <SegBtn $w={9}><Caret $c="#444" /></SegBtn>
                <SegBtn $w={27}><PercentSign>%</PercentSign></SegBtn>
                <SegBtn $w={26}><SerifLetter $s={20} $wt={700} $c="#222">,</SerifLetter></SegBtn>
              </Seg>
              <Seg $h={21} $ml={5}>
                <SegBtn $w={26} $first><DecimalIcon top=".0" bottom=".00" /></SegBtn>
                <SegBtn $w={26}><DecimalIcon top=".00" bottom=".0" /></SegBtn>
              </Seg>
            </ControlRow>
          </Rows>
        </GroupBody>
      </Group>

      <Group $w={108}>
        <GroupLabel>Format</GroupLabel>
        <GroupBody>
          <BigTool $w={56} $ml={1}>
            <BigIconRow $h={27}><CondIcon /><Caret $c="#333" /></BigIconRow>
            <BigLabel>Conditional<br />Formatting</BigLabel>
          </BigTool>
          <BigTool $w={45}>
            <BigIconRow><StylesIcon /><Caret $c="#333" /></BigIconRow>
            <BigLabel>Styles</BigLabel>
          </BigTool>
        </GroupBody>
      </Group>

      <Group $w={151}>
        <GroupLabel>Cells</GroupLabel>
        <GroupBody>
          <BigTool $w={47} $ml={4}>
            <BigIconRow><InsertIcon /><Caret $c="#333" /></BigIconRow>
            <BigLabel>Insert</BigLabel>
          </BigTool>
          <BigTool $w={46} $ml={1}>
            <BigIconRow><DeleteIcon /><Caret $c="#333" /></BigIconRow>
            <BigLabel>Delete</BigLabel>
          </BigTool>
          <BigTool $w={48} $ml={1}>
            <BigIconRow><FormatIcon /><Caret $c="#333" /></BigIconRow>
            <BigLabel>Format</BigLabel>
          </BigTool>
        </GroupBody>
      </Group>

      <Group $w={90}>
        <GroupLabel>Themes</GroupLabel>
        <GroupBody>
          <BigTool $w={48} $ml={4}>
            <BigIconRow><ThemesIcon /><Caret $c="#333" /></BigIconRow>
            <BigLabel>Themes</BigLabel>
          </BigTool>
          <ThemesStack>
            <ControlRow $gap={2}><ColorsIcon /><Caret $c="#333" /></ControlRow>
            <ThemeFontLetters>Aa<Caret $ml={1} $c="#333" /></ThemeFontLetters>
          </ThemesStack>
        </GroupBody>
      </Group>
    </RibbonPanel>
  </RibbonWrap>
)

const Sheet = () => (
  <SheetGrid>
    <HeadRow>
      <Corner><CornerMark /></Corner>
      {COLS.map(([name], i) => (
        <ColHead key={name} $sel={i >= 2 && i <= 14}>{name}</ColHead>
      ))}
    </HeadRow>
    <SheetRow $first>
      <RowHead>1</RowHead>
      <Cell $noBottom>Date</Cell>
      <Cell $noBottom>Demand Milk (lts)</Cell>
      <Cell $noBottom>Month</Cell>
      <Cell $noBottom>Year</Cell>
      {MONTHS.slice(0, 11).map((m) => <Cell $noBottom key={m}>{m}</Cell>)}
      <Cell $noBottom />
      <Cell $noBottom />
    </SheetRow>
    {ROWS.map((r) => {
      const sel = r.n >= 38 && r.n <= 46
      const dash = r.n >= 34 && r.n <= 36
      return (
        <SheetRow key={r.n}>
          <RowHead $sel={sel}>{r.n}</RowHead>
          <Cell $ls={-0.9}>{r.date}</Cell>
          <Cell $right $pr={10} $ls={-0.8}>{r.milk}</Cell>
          <Cell $sel={sel && r.n !== 38}>{r.m}</Cell>
          <Cell $right $pr={3} $ls={-1.1} $sel={sel} $dash={dash}>{r.y}</Cell>
          {MONTHS.slice(0, 11).map((m, i) => (
            <Cell key={m} $right $sel={sel} $dash={dash && i === 10}>
              {r.blank ? "" : r.hit === i ? 1 : 0}
            </Cell>
          ))}
          <Cell />
          <Cell />
        </SheetRow>
      )
    })}
    <Selection><FillHandle /></Selection>
    <PasteOption><ClipIcon /></PasteOption>
  </SheetGrid>
)

export default function App() {
  return (
    <Desktop>
      <GlobalStyle />
      <BackWindow>
        <BackTop>
          <BackLight />
          <BackNewIcon width="20" height="18" viewBox="0 0 20 18">
            <path d="M2 3h10l4 4v10H2z" fill="#e4e4e4" stroke="#777" />
            <circle cx="5" cy="5" r="4" fill="#8fb98f" />
          </BackNewIcon>
        </BackTop>
        <BackTabs><HomeGlyph c="#3a3a3a" /></BackTabs>
        <BackRibbon>
          <svg width="18" height="24" viewBox="0 0 18 24">
            <rect x="0" y="3" width="18" height="20" fill="#a8843f" stroke="#6e4b17" />
            <rect x="6" y="0" width="10" height="6" fill="#ddd" stroke="#777" />
            <rect x="8" y="10" width="10" height="13" fill="#e6e6e6" />
          </svg>
          <span>Paste</span>
        </BackRibbon>
        <BackFormula />
        <BackHead />
        {BACK_ROWS.map((n) => (
          <BackRow key={n} $h={n === 2 ? 17 : 17.2} $after={n === 3 ? 6 : 0}>{n}</BackRow>
        ))}
      </BackWindow>

      <FrontWindow>
        <TitleBar>
          <TitleRow>
            <Light $mr={7} $c="#e2453a" $d="#8e1c16" />
            <Light $mr={7} $c="#f2b03a" $d="#a5701a" />
            <Light $mr={0} $c="#6cc24a" $d="#2e7d24" />
            <DocIconSlot><DocTitleIcon /></DocIconSlot>
            <TitleText>Madurai-Dairy.xlsx</TitleText>
            <Slot $w={14} $ml={490}><ExpandIcon /></Slot>
          </TitleRow>
          <Toolbar>
            <Slot $w={28}><NewIcon /></Slot>
            <Slot $w={28}><GalleryIcon /></Slot>
            <Slot $w={28}><OpenIcon /></Slot>
            <Slot $w={28}><SaveIcon /></Slot>
            <Slot $w={28}><PrintIcon /></Slot>
            <Divider $ml={3} />
            <Slot $w={28} $ml={1}><CutIcon /></Slot>
            <Slot $w={28}><CopyIcon /></Slot>
            <Slot $w={28}><ClipIcon /></Slot>
            <Slot $w={28}><BrushIcon /></Slot>
            <Divider $ml={2} />
            <Slot $w={27}><UndoIcon /></Slot>
            <Slot $w={10}><Caret $c="#444" /></Slot>
            <Slot $w={26}><RedoIcon /></Slot>
            <Slot $w={8}><Caret $c="#888" /></Slot>
            <Divider $ml={5} />
            <Slot $w={26} $ml={2}><SumIcon /></Slot>
            <Slot $w={8}><Caret $c="#444" /></Slot>
            <Slot $w={24}><SortIcon /></Slot>
            <Slot $w={12}><Caret $c="#444" /></Slot>
            <Slot $w={28}><FilterIcon /></Slot>
            <Slot $w={8}><Caret $c="#444" /></Slot>
            <FxToggle><FxInner>fx</FxInner></FxToggle>
            <Slot $w={28} $ml={2}><ToolboxIcon /></Slot>
            <Slot $w={28}><MediaIcon /></Slot>
            <DefineLabel>Define...</DefineLabel>
            <ZoomCombo>200%<ZoomArrow><Caret $c="#444" /></ZoomArrow></ZoomCombo>
            <Divider $ml={7} />
            <Slot $w={32}><HelpIcon /></Slot>
            <SearchBox>
              <SearchGlass />
              <Caret $c="#222" />
              <SearchInput>Search in Sheet</SearchInput>
            </SearchBox>
          </Toolbar>
        </TitleBar>

        <TabBar>
          <RibbonTab $w={71} $on><HomeGlyph />Home</RibbonTab>
          <RibbonTab $w={64}>Layout</RibbonTab>
          <RibbonTab $w={66}>Tables</RibbonTab>
          <RibbonTab $w={65}>Charts</RibbonTab>
          <RibbonTab $w={79}>SmartArt</RibbonTab>
          <RibbonTab $w={80}>Formulas</RibbonTab>
          <RibbonTab $w={55}>Data</RibbonTab>
          <RibbonTab $w={68}>Review</RibbonTab>
          <TabTools>
            <ChevronUp />
            <GearIcon />
            <Caret $ml={-5} $c="#333" />
          </TabTools>
        </TabBar>

        <Ribbon />

        <FormulaBar>
          <NameBox>8R x 13C</NameBox>
          <FormulaTools>
            <StepArrows><ArrowUp /><ArrowDown /></StepArrows>
            <RoundBtn>×</RoundBtn>
            <RoundBtn>✓</RoundBtn>
            <ParenBtn>–</ParenBtn>
            <FxLabel>fx</FxLabel>
          </FormulaTools>
          <FormulaInput>Apr</FormulaInput>
          <FormulaCaret><Caret $c="#333" /></FormulaCaret>
        </FormulaBar>

        <SheetArea>
          <Sheet />
          <VScroll><VThumb /></VScroll>
        </SheetArea>

        <BottomBars>
          <ViewSwitch>
            <ViewSeg>
              <ViewBtn $on><NormalViewIcon /></ViewBtn>
              <ViewBtn><LayoutViewIcon /></ViewBtn>
            </ViewSeg>
          </ViewSwitch>
          <BottomRight>
            <SheetTabs>
              <TabNav><span>|◀</span><span>◀</span><span>▶</span><span>▶|</span></TabNav>
              <SheetTab>Exhibit 4</SheetTab>
              <AddTab>+</AddTab>
              <HScrollTrack><HThumb /></HScrollTrack>
            </SheetTabs>
            <StatusBar>
              <StatusCell $w={85} $pl={2} $dark>Normal View</StatusCell>
              <StatusCell $w={511} $pl={7}>Select destination and press ENTER or choose Paste</StatusCell>
              <StatusCell $w={133} $pl={3}>Sum= 16096<Caret $ml={52} $s={5} $c="#111" /></StatusCell>
              <StatusCell $w={33} />
              <StatusCell $w={33} />
              <StatusCell $w={26} />
              <StatusEnd><GripIcon /></StatusEnd>
            </StatusBar>
          </BottomRight>
        </BottomBars>
      </FrontWindow>
    </Desktop>
  )
}
